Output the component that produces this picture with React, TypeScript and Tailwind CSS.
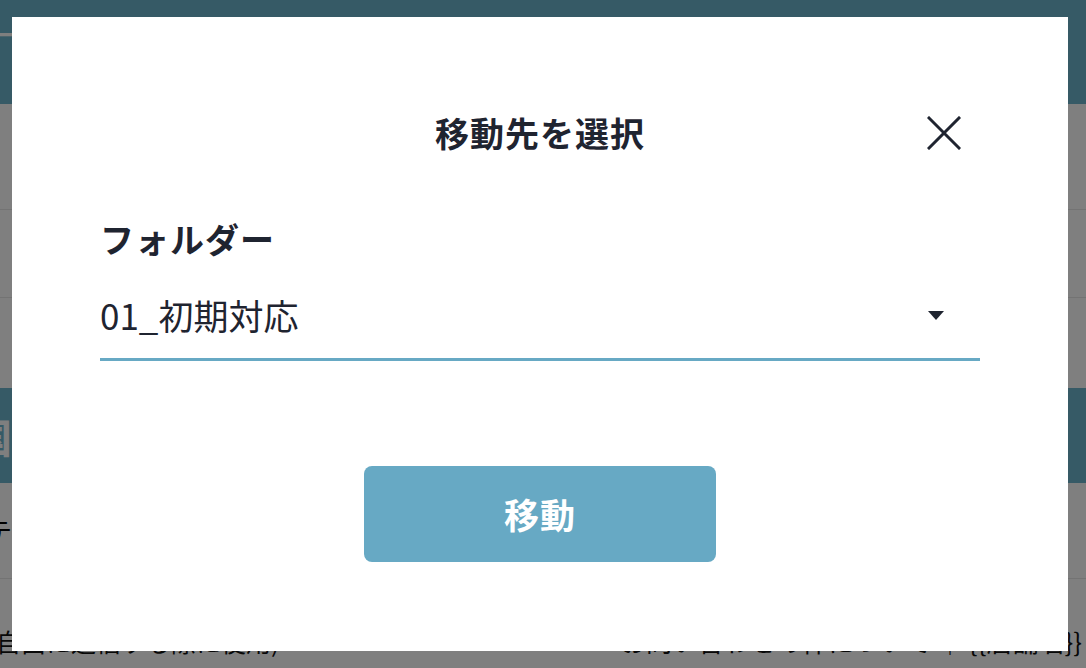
import React from 'react'

const FONT = '"Noto Sans CJK JP", "Noto Sans", sans-serif'

function Background() {
  return (
    <div className="h-[668px] w-[1086px] overflow-hidden bg-white" style={{ fontFamily: FONT }}>
      {/* header */}
      <div className="flex h-[104px] items-start bg-[#6cb4cc] pt-[22px]">
        <span className="-ml-[8px] text-[22px] font-bold leading-none text-white">ーン</span>
      </div>
      <div className="h-[106px] border-b border-[#e6e6e6]" />
      <div className="h-[88px] border-b border-[#e6e6e6]" />
      <div className="h-[90px]" />
      {/* section band */}
      <div className="flex h-[95px] items-center bg-[#6cb4cc]">
        <span className="-ml-[28px] text-[40px] font-bold text-white">国</span>
      </div>
      <div className="flex h-[96px] items-center border-b border-[#e6e6e6]">
        <span className="-ml-[14px] text-[26px] text-black">テンプレート</span>
      </div>
      <div className="flex h-[90px] items-start justify-between pt-[42px] text-[25px] leading-[40px] text-[#111]">
        <span className="-ml-[4px]">自由に返信する際に使用)</span>
        <span className="mr-[4px] whitespace-pre text-[26px]">お問い合わせの件について ｜ {'{{店舗名}}'}</span>
      </div>
    </div>
  )
}

function CloseIcon() {
  return (
    <svg width="34" height="34" viewBox="0 0 34 34" fill="none">
      <path d="M2 2L32 32M32 2L2 32" stroke="#1f2430" strokeWidth="3" strokeLinecap="square" />
    </svg>
  )
}

export default function App() {
  return (
    <div className="relative h-[668px] w-[1086px] overflow-hidden">
      <Background />
      <div className="fixed inset-0 bg-black/50" />
      <div
        className="fixed left-[12px] top-[17px] flex h-[634px] w-[1056px] flex-col bg-white px-[88px] pt-[86px] text-[#1f2430]"
        style={{ fontFamily: FONT }}
      >
        {/* title */}
        <div className="grid h-[60px] grid-cols-[1fr_auto_1fr] items-center">
          <div />
          <h2 className="text-[34px] font-bold leading-none tracking-[1px]">移動先を選択</h2>
          <button type="button" className="mr-[19px] justify-self-end">
            <CloseIcon />
          </button>
        </div>

        {/* folder select */}
        <div className="mt-[52px] text-[34px] font-bold leading-[48px] tracking-[1px]">フォルダー</div>
        <div className="mt-[28px] flex items-center justify-between border-b-[3px] border-[#67a9c4] pb-[19px]">
          <span className="text-[35px] leading-[48px]">01_初期対応</span>
          <svg width="16" height="9" viewBox="0 0 16 9" className="mr-[36px]">
            <path d="M0 0H16L8 9Z" fill="#1f2430" />
          </svg>
        </div>

        {/* submit */}
        <button
          type="button"
          className="mx-auto mt-[105px] flex h-[96px] w-[352px] items-center justify-center rounded-[8px] bg-[#67a9c4] text-[35px] font-bold tracking-[1px] text-white"
        >
          移動
        </button>
      </div>
    </div>
  )
}
